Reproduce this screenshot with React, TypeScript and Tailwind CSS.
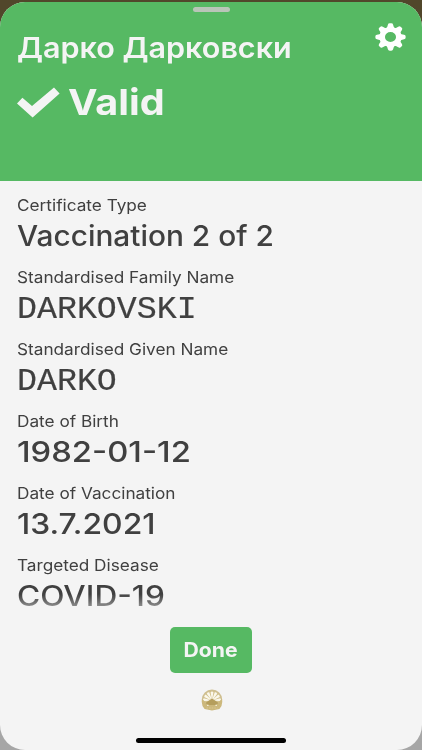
import { clsx } from "clsx";

const fields = [
  { label: "Certificate Type", value: "Vaccination 2 of 2", stretch: "scale-x-[1.065]" },
  { label: "Standardised Family Name", value: "DARKOVSKI", mono: true, stretch: "scale-x-[1.08]" },
  { label: "Standardised Given Name", value: "DARKO", mono: true, stretch: "scale-x-[1.08]" },
  { label: "Date of Birth", value: "1982-01-12", stretch: "scale-x-[1.17]" },
  { label: "Date of Vaccination", value: "13.7.2021", stretch: "scale-x-[1.138]" },
  { label: "Targeted Disease", value: "COVID-19", faded: true, stretch: "scale-x-[1.13]" },
];

const teeth = [0, 45, 90, 135, 180, 225, 270, 315];
const rays = [-84, -56, -28, 0, 28, 56, 84];

function GearIcon() {
  return (
    <svg viewBox="0 0 32 32" preserveAspectRatio="none" className="h-7 w-[31px]" fill="white">
      {teeth.map((angle) => (
        <path
          key={angle}
          d="M11 7.5 Q13 4.6 13.3 2 Q13.6 .4 15.2 .4 H16.8 Q18.4 .4 18.7 2 Q19 4.6 21 7.5 Z"
          transform={`rotate(${angle} 16 16)`}
        />
      ))}
      <circle cx="16" cy="16" r="8.6" fill="none" stroke="white" strokeWidth="5.8" />
    </svg>
  );
}

function CheckIcon() {
  return (
    <svg viewBox="0 0 43 31" className="h-[31px] w-[43px]" fill="#f4f4f4">
      <path d="M0 16.5 L5.4 10.8 L15 19 L37 .5 L42.6 6.5 L15.6 30.4 Z" />
    </svg>
  );
}

function Emblem() {
  return (
    <svg viewBox="0 0 22 22" className="h-[22px] w-[22px]">
      <circle cx="11" cy="10.6" r="9.2" fill="#d3c28d" stroke="#cfbf90" strokeWidth="2" />
      {rays.map((angle) => (
        <path key={angle} d="M10.8 11 L9.6 3 Q11 2 12.4 3 L11.2 11 Z" fill="#fbf8ec" transform={`rotate(${angle} 11 11.5)`} />
      ))}
      <path d="M1 10 Q-.2 16 3.6 20 L11 21.6 L18.4 20 Q22.2 16 21 10 L18.6 12 L17 15 H5 L3.4 12 Z" fill="#ccb87c" />
      <path d="M4.5 14 L9 10.8 L11 9.6 L13 10.8 L17.5 14 L15 16 H7 Z" fill="#b59e5c" />
      <path d="M6 16.3 H7.6 M14.4 16.3 H16" stroke="#f1ead2" strokeWidth="1.2" />
      <path d="M5.5 19 H16.5" stroke="#dccb98" strokeWidth=".8" strokeDasharray="1.6 1" />
    </svg>
  );
}

export default function App() {
  return (
    <div className="h-[750px] w-[422px] overflow-hidden bg-linear-to-b from-[#51472b] from-50% to-[#a6a6a6] to-50% pt-0.5 font-['Inter','Liberation_Sans',sans-serif]">
      <div className="flex h-[748px] flex-col overflow-hidden rounded-[25px] bg-[#f4f4f4]">
        <header className="h-[179.4px] shrink-0 bg-[#56b963] text-[#f4f4f4]">
          <div className="mx-auto flex h-[15px] w-[37px] items-center">
            <div className="h-[5px] w-full rounded-full bg-[#b9c5b8]" />
          </div>
          <div className="flex items-start justify-between pr-4 pl-[17px]">
            <h1 className="mt-[13px] origin-left scale-x-[1.09] text-[28px] leading-9 font-semibold whitespace-nowrap">
              Дарко Дарковски
            </h1>
            <button aria-label="Settings" className="mt-1.5">
              <GearIcon />
            </button>
          </div>
          <div className="mt-[13px] flex items-center gap-2 pl-[17px]">
            <CheckIcon />
            <span className="origin-left scale-x-[1.1] text-[36px] leading-[46px] font-bold">Valid</span>
          </div>
        </header>

        <main className="flex h-[433px] shrink-0 flex-col gap-2.5 overflow-hidden pt-3 pl-[17px] text-[#404040]">
          {fields.map((f) => (
            <div key={f.label} className="flex h-[62px] shrink-0 flex-col items-start">
              <span className="origin-left scale-x-[1.075] text-[16px] leading-6 whitespace-nowrap">{f.label}</span>
              <span
                className={clsx(
                  "origin-left whitespace-nowrap",
                  f.stretch,
                  f.mono
                    ? "font-['Liberation_Mono',monospace] text-[30.8px] leading-[42px] [-webkit-text-stroke:0.2px_#404040]"
                    : "text-[28px] leading-[38px] font-medium",
                  f.faded && "bg-linear-to-b from-[#404040] from-45% to-[#a0a0a0] to-85% bg-clip-text text-transparent"
                )}
              >
                {f.value}
              </span>
            </div>
          ))}
        </main>

        <footer className="flex flex-1 flex-col items-center">
          <button className="mt-[12.2px] h-[46px] w-[82px] rounded-[5px] bg-[#56b963] text-[20px] font-bold text-[#f4f4f4]">
            <span className="inline-block scale-x-[1.06]">Done</span>
          </button>
          <div className="mt-[16px] ml-[2px]">
            <Emblem />
          </div>
          <div className="mt-auto mb-[7px] h-[5px] w-[150px] rounded-full bg-black" />
        </footer>
      </div>
    </div>
  );
}
